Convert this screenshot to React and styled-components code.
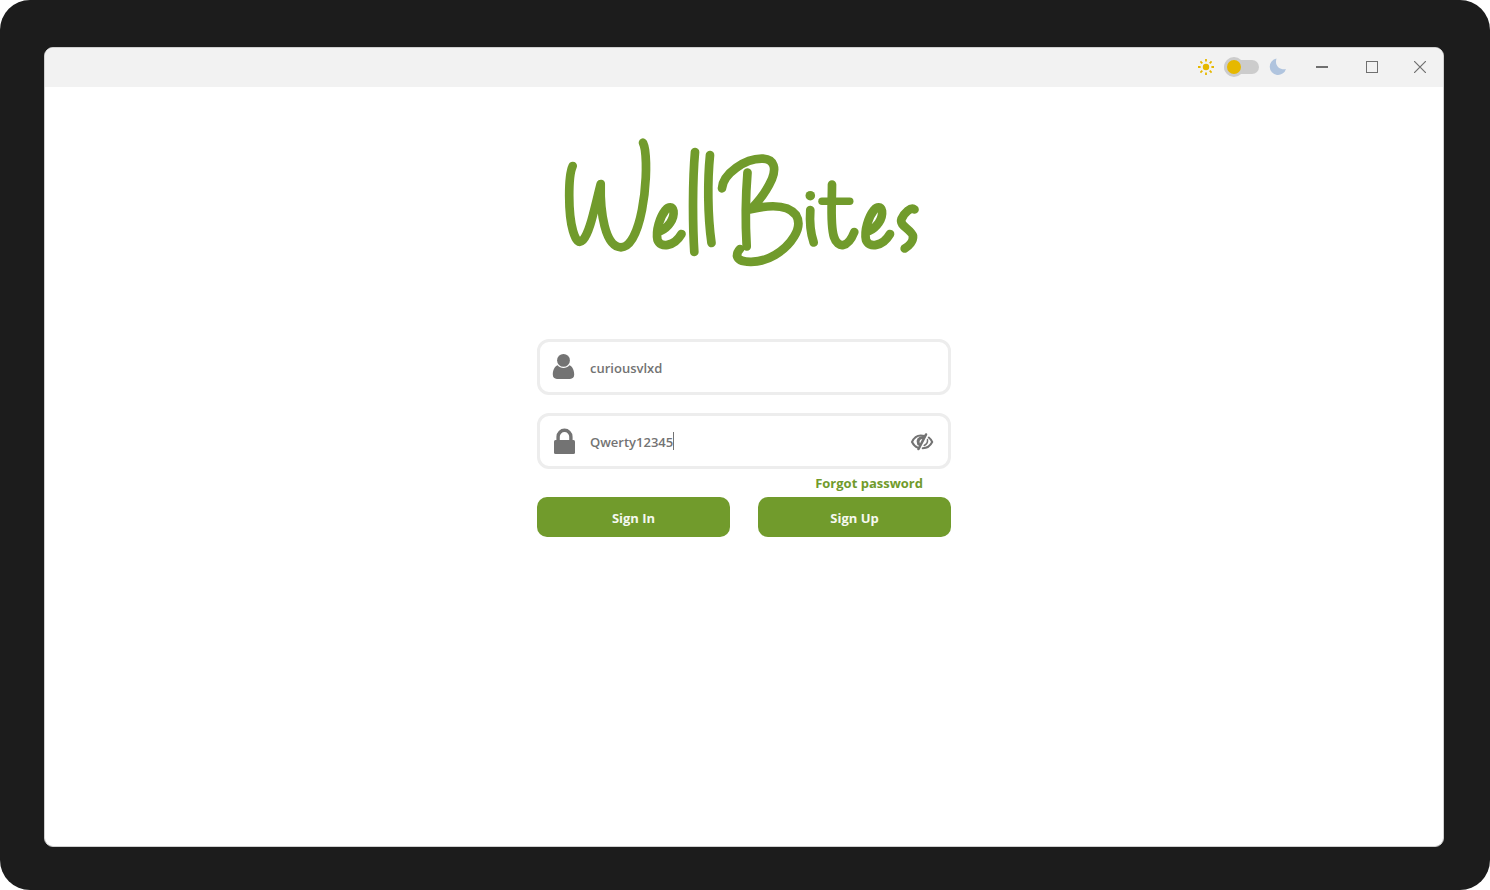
import React, { useState } from "react";
import styled, { createGlobalStyle } from "styled-components";

const GlobalStyle = createGlobalStyle`
  *, *::before, *::after { box-sizing: border-box; }
  body {
    margin: 0;
    background: #ffffff;
    font-family: "Open Sans", "Noto Sans", sans-serif;
  }
  button, input { font: inherit; }
`;

const Frame = styled.div`
  display: flex;
  min-height: 100vh;
  padding: 47px 46px 43px 44px;
  border-radius: 30px;
  background: #1c1c1c;
`;

const Window = styled.div`
  flex: 1;
  display: flex;
  flex-direction: column;
  overflow: hidden;
  border: 1px solid #cfcfcf;
  border-radius: 9px;
  background: #ffffff;
`;

const TitleBar = styled.header`
  display: flex;
  justify-content: flex-end;
  align-items: center;
  height: 39px;
  padding-bottom: 1px;
  background: #f2f2f2;
`;

const ThemeSwitch = styled.label`
  display: flex;
  align-items: center;
  gap: 10px;
  margin-right: 10px;

  svg { display: block; }
`;

const Toggle = styled.input`
  appearance: none;
  display: flex;
  align-items: center;
  width: 35px;
  height: 14px;
  margin: 0;
  border-radius: 7px;
  background: #cccccc;

  &::before {
    content: "";
    flex: none;
    width: 20px;
    height: 20px;
    border: 3px solid #cccccc;
    border-radius: 50%;
    background: #e6b800;
  }

  &:checked { justify-content: flex-end; }
`;

const WindowButton = styled.button`
  display: flex;
  justify-content: center;
  align-items: center;
  width: ${(p) => (p.$last ? 46 : 50)}px;
  height: 38px;
  padding: 0;
  border: 0;
  background: transparent;
  color: #707070;
`;

const Content = styled.main`
  flex: 1;
  display: flex;
  flex-direction: column;
  align-items: center;
  padding: 43px 16px;
`;

const Logo = styled.svg`
  display: block;
  width: 380px;
  height: 145px;
  margin-bottom: 64px;
  fill: none;
  stroke: #719b2c;
  stroke-width: 8.7;
  stroke-linecap: round;
  stroke-linejoin: round;
`;

const Form = styled.form`
  width: 100%;
  max-width: 414px;
`;

const Field = styled.label`
  display: flex;
  align-items: center;
  height: 56px;
  margin-top: ${(p) => (p.$spaced ? 18 : 0)}px;
  padding: 0 14px 0 10px;
  border: 3px solid #ededed;
  border-radius: 12px;
  color: #737373;

  svg { flex: none; display: block; }
`;

const TextInput = styled.input`
  field-sizing: content;
  min-width: 0;
  margin-left: 12px;
  padding: 2px 0 0;
  border: 0;
  outline: 0;
  background: transparent;
  color: #737373;
  font-size: 13px;
  font-weight: 600;
  line-height: 20px;
`;

const Caret = styled.span`
  width: 1px;
  height: 18px;
  background: #737373;
`;

const RevealButton = styled.button`
  margin-left: auto;
  padding: 2px 0 0;
  border: 0;
  background: transparent;
  color: #737373;
`;

const LinkRow = styled.div`
  display: flex;
  justify-content: flex-end;
  align-items: center;
  height: 28px;
  padding-right: 28px;
`;

const ForgotLink = styled.a`
  color: #719b2c;
  font-size: 13px;
  font-weight: 700;
  line-height: 20px;
  text-decoration: none;
`;

const Actions = styled.div`
  display: grid;
  grid-template-columns: 1fr 1fr;
  gap: 28px;
`;

const ActionButton = styled.button`
  height: 40px;
  padding: 2px 0 0;
  border: 0;
  border-radius: 10px;
  background: #719b2c;
  color: #f5f8ef;
  font-size: 13px;
  font-weight: 700;
  line-height: 20px;
`;

function SunIcon() {
  return (
    <svg width="16" height="16" viewBox="0 0 16 16" fill="none" stroke="#e6b800" strokeWidth="1.8" aria-hidden="true">
      <circle cx="8" cy="8" r="3.2" fill="#e6b800" stroke="none" />
      <path d="M8 0v2.6M8 13.4V16M0 8h2.6M13.4 8H16M2.4 2.4l1.9 1.9M11.7 11.7l1.9 1.9M2.4 13.6l1.900-1.900M11.700 4.300l1.900-1.900" />
    </svg>
  );
}

function MoonIcon() {
  return (
    <svg width="18" height="18" viewBox="0 0 18 18" aria-hidden="true">
      <path d="M7.500.5A8.300 8.300 0 1 0 17 11C12 12.300 5 8.500 7.500.5Z" fill="#b0c4de" />
    </svg>
  );
}

function UserIcon() {
  return (
    <svg width="28" height="28" viewBox="0 0 28 28" fill="currentColor" aria-hidden="true">
      <circle cx="13.5" cy="7.400" r="6.400" />
      <path d="M7.600 12.300c1.500 1.700 3.600 2.600 5.900 2.600s4.400-.9 5.900-2.600c3 1.200 4.800 5 4.800 9.300 0 3-1.600 4.300-4.200 4.300H7c-2.600 0-4.200-1.300-4.200-4.300 0-4.300 1.800-8.100 4.800-9.300Z" />
    </svg>
  );
}

function LockIcon() {
  return (
    <svg width="28" height="28" viewBox="0 0 28 28" aria-hidden="true">
      <path d="M8.100 14V9.700a6.400 6.400 0 0 1 12.800 0V14" fill="none" stroke="currentColor" strokeWidth="3.400" />
      <rect x="4" y="13" width="21" height="14" rx="1.500" fill="currentColor" />
    </svg>
  );
}

function EyeOffIcon() {
  return (
    <svg width="24" height="20" viewBox="0 0 24 20" fill="none" stroke="currentColor" strokeWidth="2" strokeLinecap="round" aria-hidden="true">
      <path d="M14.500 4C8 2.200 4 5.500 2 10c1.300 2.600 3.300 4.700 5.800 5.600" />
      <path d="M16 2.500 8.500 17" strokeWidth="2.600" />
      <path d="M18.800 5.500c1.500 1.100 2.600 2.600 3.400 4.500-2 4-5.200 6.200-9.500 6.200" />
      <path d="M13 5.500c-4 0-6 3-4.400 6.500" strokeWidth="3" />
      <path d="M17.500 7.500c.3 2.500-.8 4.800-3.300 6" strokeWidth="1.500" />
    </svg>
  );
}

function WellBitesLogo() {
  return (
    <Logo viewBox="554 130 380 145" role="img" aria-label="WellBites">
      <path d="M572.700 166C568 176 568 214 573 231C576 241 579 244 583 240C590 232 594 210 600.700 184C600 212 605 247 621 247.300C641 247 649 180 645 150Q644.500 146 643 142.700" />
      <path d="M660.500 231C668 228 674.500 219 673.500 211C672.500 206 668.500 206.500 665.500 210C660 217 655.500 230 657.500 240C660 248 674 247 681.500 234" />
      <path d="M695 152C692.500 180 692.500 224 694.300 252" />
      <path d="M710 155C707.500 180 707.500 215 711.500 243" />
      <path d="M722 188.300C723 174 745 158 763 158.700C775 159.500 776 169 772 179C768 188 760 200 750.700 209.300C773 204 789 206 796 215C804 228 790 246 775 255C760 264 739 264 737 256Q737 252 740 249" />
      <path d="M747.500 172.500Q744.500 210 746.700 246.500" />
      <path d="M810.300 210Q809 229 813.700 242.500" />
      <circle cx="810.300" cy="195.700" r="4.800" fill="#719b2c" stroke="none" />
      <path d="M832 184.500C832 205 830 225 834 237C838 249 848 248 854.300 232" />
      <path d="M822 201.300H849.700" strokeWidth="7.500" />
      <path d="M869 231C876.500 228 883 219 882 211C881 206 877 206.500 874 210C868.500 217 864 230 866 240C868.500 248 882.500 247 890 234" />
      <path d="M914.500 209.500C911 206.500 904 213 901.500 219C899 226 911 229 913 236C913.500 241 909 246 904.700 248.500" />
    </Logo>
  );
}

export default function App() {
  const [dark, setDark] = useState(false);
  const [user, setUser] = useState("curiousvlxd");
  const [password, setPassword] = useState("Qwerty12345");

  return (
    <>
      <GlobalStyle />
      <Frame>
        <Window>
          <TitleBar>
            <ThemeSwitch>
              <SunIcon />
              <Toggle type="checkbox" aria-label="Dark theme" checked={dark} onChange={(e) => setDark(e.target.checked)} />
              <MoonIcon />
            </ThemeSwitch>
            <WindowButton type="button" aria-label="Minimize">
              <svg width="12" height="12" viewBox="0 0 12 12"><path d="M0 6h12" stroke="currentColor" strokeWidth="2" /></svg>
            </WindowButton>
            <WindowButton type="button" aria-label="Maximize">
              <svg width="12" height="12" viewBox="0 0 12 12"><rect x="0.500" y="0.500" width="11" height="11" fill="none" stroke="currentColor" /></svg>
            </WindowButton>
            <WindowButton type="button" aria-label="Close" $last>
              <svg width="12" height="12" viewBox="0 0 12 12"><path d="m0 0 12 12M12 0 0 12" stroke="currentColor" strokeWidth="1.200" /></svg>
            </WindowButton>
          </TitleBar>
          <Content>
            <WellBitesLogo />
            <Form onSubmit={(e) => e.preventDefault()}>
              <Field>
                <UserIcon />
                <TextInput type="text" aria-label="Username" value={user} onChange={(e) => setUser(e.target.value)} />
              </Field>
              <Field $spaced>
                <LockIcon />
                <TextInput type="text" aria-label="Password" value={password} onChange={(e) => setPassword(e.target.value)} />
                <Caret />
                <RevealButton type="button" aria-label="Hide password">
                  <EyeOffIcon />
                </RevealButton>
              </Field>
              <LinkRow>
                <ForgotLink href="#forgot">Forgot password</ForgotLink>
              </LinkRow>
              <Actions>
                <ActionButton type="submit">Sign In</ActionButton>
                <ActionButton type="button">Sign Up</ActionButton>
              </Actions>
            </Form>
          </Content>
        </Window>
      </Frame>
    </>
  );
}
